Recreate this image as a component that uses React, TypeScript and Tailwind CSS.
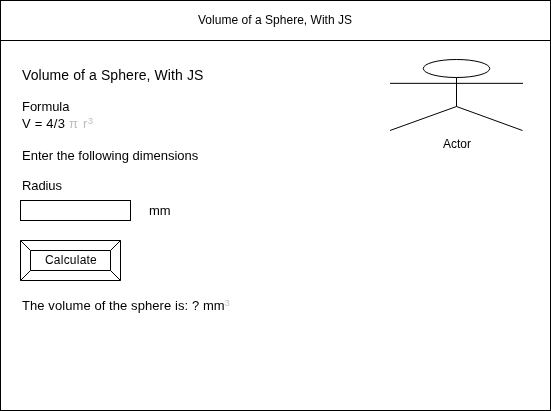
export default function App() {
  return (
    <main className="flex h-[411px] w-[551px] flex-col border border-black bg-white font-['Liberation_Sans',Arial,sans-serif] text-[13px] leading-[17px] text-black antialiased">
      <header className="flex h-[40px] shrink-0 items-center justify-center border-b border-black text-[12px]">
        <h1 className="pr-px tracking-[0.025px] will-change-transform">Volume of a Sphere, With JS</h1>
      </header>
      <div className="flex flex-1 justify-between will-change-transform">
        <section className="flex flex-col items-start pl-[19px] pt-[26px]">
          <h2 className="pl-[2px] text-[14px] tracking-[0.09px]">Volume of a Sphere, With JS</h2>
          <p className="mt-[14px] pl-[2px] tracking-[-0.04px]">Formula</p>
          <p className="pl-[2px] tracking-[0.22px]">V = 4/3 <span className="text-[#bcbcc0] tracking-[0.7px]">π r<sup className="font-['Liberation_Sans',sans-serif] text-[9px] leading-none">3</sup></span></p>
          <p className="mt-[15px] pl-[2px]">Enter the following dimensions</p>
          <label htmlFor="radius" className="mt-[13px] pl-[2px] tracking-[-0.1px]">Radius</label>
          <div className="mt-[6px] flex items-center">
            <input id="radius" className="h-[21px] w-[111px] border border-black bg-white px-1 outline-none" />
            <span className="ml-[18px]">mm</span>
          </div>
          <button className="mt-[19px] grid h-[41px] w-[101px] place-items-center text-[12px] tracking-[0.22px]">
            <svg className="col-start-1 row-start-1" width="101" height="41" fill="none" stroke="black">
              <path d="M.5.5h100v40H.5zM10.5 10.5h80v20h-80zM.5.5l10 10M100.5.5l-10 10M.5 40.5l10-10M100.5 40.5l-10-10" />
            </svg>
            <span className="col-start-1 row-start-1 pl-px">Calculate</span>
          </button>
          <p className="mt-[16px] pl-[2px] tracking-[0.08px]">The volume of the sphere is: ? mm<sup className="font-['Liberation_Sans',sans-serif] text-[9px] leading-none text-[#c0c4ca]">3</sup></p>
        </section>
        <figure className="mr-[27px] flex flex-col items-center pt-[18px] text-[12px]">
          <svg width="133" height="73" fill="none" stroke="black">
            <ellipse cx="66.5" cy="9.5" rx="33.25" ry="9" />
            <path d="M66.5 18.5v29M0 24.33h133M66.5 47.5L0 71.5M66.5 47.5l66 24" />
          </svg>
          <figcaption className="mt-[4px] pl-px">Actor</figcaption>
        </figure>
      </div>
    </main>
  );
}
